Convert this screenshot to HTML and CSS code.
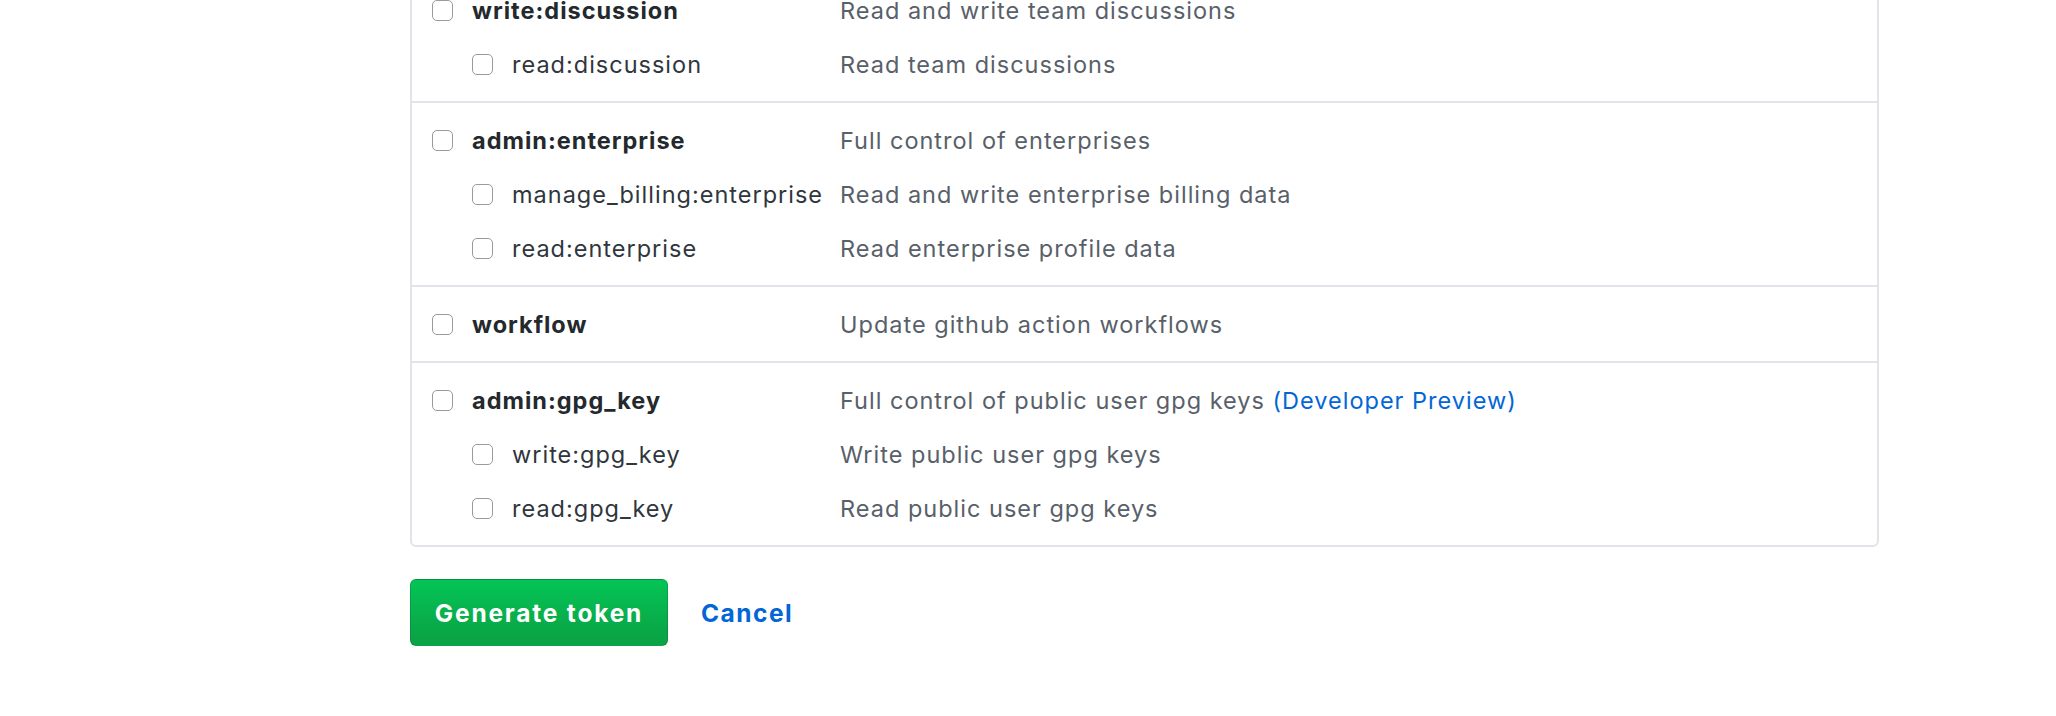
FILE: index.html
```html
<!DOCTYPE html>
<html lang="en">
<head>
<meta charset="utf-8">
<title>Token scopes</title>
<link rel="stylesheet" href="styles.css">
</head>
<body>
<div class="page">
  <div class="scopes">
    <div class="scope-group">
      <div class="scope-row">
        <label class="scope-label parent"><input type="checkbox" class="cb"><span>write:discussion</span></label>
        <span class="scope-desc">Read and write team discussions</span>
      </div>
      <div class="scope-row">
        <label class="scope-label child"><input type="checkbox" class="cb"><span>read:discussion</span></label>
        <span class="scope-desc">Read team discussions</span>
      </div>
    </div>
    <div class="scope-group">
      <div class="scope-row">
        <label class="scope-label parent"><input type="checkbox" class="cb"><span>admin:enterprise</span></label>
        <span class="scope-desc">Full control of enterprises</span>
      </div>
      <div class="scope-row">
        <label class="scope-label child"><input type="checkbox" class="cb"><span>manage_billing:enterprise</span></label>
        <span class="scope-desc">Read and write enterprise billing data</span>
      </div>
      <div class="scope-row">
        <label class="scope-label child"><input type="checkbox" class="cb"><span>read:enterprise</span></label>
        <span class="scope-desc">Read enterprise profile data</span>
      </div>
    </div>
    <div class="scope-group">
      <div class="scope-row">
        <label class="scope-label parent"><input type="checkbox" class="cb"><span>workflow</span></label>
        <span class="scope-desc">Update github action workflows</span>
      </div>
    </div>
    <div class="scope-group">
      <div class="scope-row">
        <label class="scope-label parent"><input type="checkbox" class="cb"><span>admin:gpg_key</span></label>
        <span class="scope-desc">Full control of public user gpg keys <a href="#" class="preview-link">(Developer Preview)</a></span>
      </div>
      <div class="scope-row">
        <label class="scope-label child"><input type="checkbox" class="cb"><span>write:gpg_key</span></label>
        <span class="scope-desc">Write public user gpg keys</span>
      </div>
      <div class="scope-row">
        <label class="scope-label child"><input type="checkbox" class="cb"><span>read:gpg_key</span></label>
        <span class="scope-desc">Read public user gpg keys</span>
      </div>
    </div>
  </div>
  <div class="actions">
    <button type="button" class="btn-primary">Generate token</button>
    <a href="#" class="cancel-link">Cancel</a>
  </div>
</div>
</body>
</html>
```

FILE: styles.css
```css
* { box-sizing: border-box; }

html, body {
  margin: 0;
  padding: 0;
  background: #ffffff;
}

body {
  font-family: Inter, "Liberation Sans", Arial, sans-serif;
  font-size: 23.5px;
  letter-spacing: 1px;
  color: #24292e;
  overflow: hidden;
}

.page {
  padding-left: 410px;
  width: 1879px;
}

.scopes {
  margin-top: -29px;
  border: 2px solid #e1e4e8;
  border-radius: 6px;
  background: #fff;
}

.scope-group {
  padding: 10px 0 10px 20px;
}

.scope-group + .scope-group {
  border-top: 2px solid #e1e4e8;
}

.scope-row {
  display: grid;
  grid-template-columns: 408px 1fr;
  align-items: center;
  height: 54px;
}

.scope-label {
  display: flex;
  align-items: center;
  white-space: nowrap;
}

.scope-label.parent { font-weight: 700; color: #24292e; }
.scope-label.child { padding-left: 40px; font-weight: 400; color: #2f363d; }

.cb {
  appearance: none;
  -webkit-appearance: none;
  margin: 0 19px 0 0;
  width: 21px;
  height: 21px;
  border: 1.5px solid #9a9a9a;
  border-radius: 5px;
  background: #fff;
  flex: none;
}

.scope-desc {
  color: #586069;
  white-space: nowrap;
}

.preview-link {
  color: #0366d6;
  text-decoration: none;
}

.actions {
  display: flex;
  align-items: center;
  gap: 33px;
  margin-top: 32px;
}

.btn-primary {
  width: 258px;
  height: 67px;
  font-family: inherit;
  font-size: 24.5px;
  letter-spacing: 1.8px;
  font-weight: 700;
  color: #fff;
  background: linear-gradient(180deg, #04c556 0%, #0aa345 90%);
  border: 1.5px solid rgba(27, 31, 35, 0.18);
  border-radius: 6px;
  padding: 0;
}

.cancel-link {
  color: #0366d6;
  font-weight: 700;
  font-size: 24.5px;
  letter-spacing: 1.5px;
  text-decoration: none;
}
```
